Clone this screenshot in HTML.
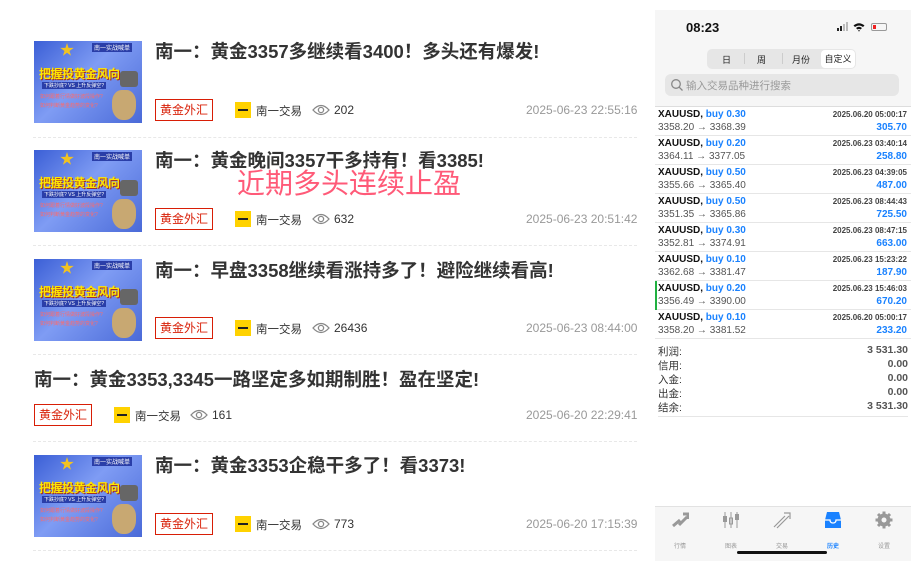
<!DOCTYPE html>
<html><head><meta charset="utf-8"><style>
*{margin:0;padding:0;box-sizing:border-box}
body{width:919px;height:571px;background:#fff;position:relative;overflow:hidden;font-family:"Liberation Sans","Noto Sans CJK SC",sans-serif}
.a{position:absolute}
.thumb{position:absolute;width:108px;height:82px;background:linear-gradient(135deg,#3b5fd6 0%,#7f9cf4 45%,#4a6ad8 100%);overflow:hidden}
.thumb .t1{position:absolute;left:5px;top:24px;font-size:12px;font-weight:bold;color:#ffe600;letter-spacing:-0.5px;text-shadow:1px 1px 0 #a0302a;white-space:nowrap}
.thumb .t2{position:absolute;left:8px;top:41px;font-size:5px;color:#fff;background:#2a3ea8;padding:0 2px;white-space:nowrap}
.thumb .t3{position:absolute;left:6px;top:52px;font-size:5px;color:#ff6a6a;line-height:9px;white-space:nowrap}
.thumb .bag{position:absolute;right:6px;bottom:3px;width:24px;height:30px;background:#c8a872;border-radius:40% 40% 45% 45%}
.thumb .star{position:absolute;left:26px;top:2px;width:14px;height:14px;background:#f2c320;clip-path:polygon(50% 0,61% 35%,98% 35%,68% 57%,79% 91%,50% 70%,21% 91%,32% 57%,2% 35%,39% 35%)}
.thumb .sq{position:absolute;left:86px;top:30px;width:18px;height:16px;background:#666;border-radius:3px}
.thumb .hd{position:absolute;left:58px;top:2px;font-size:6px;color:#fff;background:#2a3ea8;padding:0 2px}
.title{position:absolute;font-size:18.5px;font-weight:bold;color:#333;white-space:nowrap}
.tag{position:absolute;width:58px;height:22px;border:1px solid #d81e06;color:#d81e06;font-size:12px;line-height:20px;text-align:center}
.logo{position:absolute;width:16px;height:16px;background:#ffd200}
.logo:after{content:"";position:absolute;left:3px;top:7px;width:10px;height:2px;background:#222}
.author{position:absolute;font-size:11.5px;color:#333}
.eye{position:absolute;width:18px;height:12px}
.views{position:absolute;font-size:12px;color:#333}
.date{position:absolute;font-size:12px;color:#999}
.sep{position:absolute;left:33px;width:604px;border-top:1px dashed #e8e8e8}
.ph{position:absolute;left:655px;top:10px;width:256px;height:551px;background:#fff}
.row{position:absolute;left:0;width:256px;height:29px;border-bottom:1px solid #e6e6e6;font-size:10px}
.row .l1{position:absolute;left:3px;top:2px;font-weight:bold;color:#111}
.row .l1 b{color:#1a82ff}
.row .d{position:absolute;right:4px;top:3px;font-size:8px;font-weight:bold;color:#444}
.row .l2{position:absolute;left:3px;top:15px;color:#555}
.row .v{position:absolute;right:4px;top:15px;font-weight:bold;color:#1a82ff}
.sm{position:absolute;left:3px;width:250px;font-size:10.5px;color:#333;height:14px}
.sm span{position:absolute;right:0;font-weight:bold;color:#555}
.tab{position:absolute;top:531px;font-size:6px;color:#999;text-align:center;width:30px}
</style></head><body>

<div class="thumb" style="left:34px;top:41px"><div class="star"></div><div class="hd">南一实战喊单</div><div class="t1">把握投黄金风向</div><div class="sq"></div><div class="t2">下跌抄底? VS 上升反弹空?</div><div class="t3">如何跟着行情做好波段操作?<br>如何判断黄金趋势的变化?</div><div class="bag"></div></div>
<div class="title" style="left:155px;top:38px">南一：黄金3357多继续看3400！多头还有爆发!</div>
<div class="tag" style="left:155px;top:99px">黄金外汇</div>
<div class="logo" style="left:235px;top:102px"></div><div class="author" style="left:256px;top:103px">南一交易</div>
<svg class="eye" style="left:312px;top:104px" viewBox="0 0 18 12"><path d="M1 6Q9-3 17 6Q9 15 1 6Z" fill="none" stroke="#888" stroke-width="1.3"/><circle cx="9" cy="6" r="2.6" fill="none" stroke="#888" stroke-width="1.3"/></svg>
<div class="views" style="left:334px;top:103px">202</div>
<div class="date" style="left:526px;top:103px">2025-06-23 22:55:16</div>
<div class="sep" style="top:137px"></div>

<div class="thumb" style="left:34px;top:150px"><div class="star"></div><div class="hd">南一实战喊单</div><div class="t1">把握投黄金风向</div><div class="sq"></div><div class="t2">下跌抄底? VS 上升反弹空?</div><div class="t3">如何跟着行情做好波段操作?<br>如何判断黄金趋势的变化?</div><div class="bag"></div></div>
<div class="title" style="left:155px;top:147px">南一：黄金晚间3357干多持有！看3385!</div>
<div class="a" style="left:237px;top:162px;font-size:28px;color:#ff5a78;white-space:nowrap">近期多头连续止盈</div>
<div class="tag" style="left:155px;top:208px">黄金外汇</div>
<div class="logo" style="left:235px;top:211px"></div><div class="author" style="left:256px;top:212px">南一交易</div>
<svg class="eye" style="left:312px;top:213px" viewBox="0 0 18 12"><path d="M1 6Q9-3 17 6Q9 15 1 6Z" fill="none" stroke="#888" stroke-width="1.3"/><circle cx="9" cy="6" r="2.6" fill="none" stroke="#888" stroke-width="1.3"/></svg>
<div class="views" style="left:334px;top:212px">632</div>
<div class="date" style="left:526px;top:212px">2025-06-23 20:51:42</div>
<div class="sep" style="top:245px"></div>

<div class="thumb" style="left:34px;top:259px"><div class="star"></div><div class="hd">南一实战喊单</div><div class="t1">把握投黄金风向</div><div class="sq"></div><div class="t2">下跌抄底? VS 上升反弹空?</div><div class="t3">如何跟着行情做好波段操作?<br>如何判断黄金趋势的变化?</div><div class="bag"></div></div>
<div class="title" style="left:155px;top:257px">南一：早盘3358继续看涨持多了！避险继续看高!</div>
<div class="tag" style="left:155px;top:317px">黄金外汇</div>
<div class="logo" style="left:235px;top:320px"></div><div class="author" style="left:256px;top:321px">南一交易</div>
<svg class="eye" style="left:312px;top:322px" viewBox="0 0 18 12"><path d="M1 6Q9-3 17 6Q9 15 1 6Z" fill="none" stroke="#888" stroke-width="1.3"/><circle cx="9" cy="6" r="2.6" fill="none" stroke="#888" stroke-width="1.3"/></svg>
<div class="views" style="left:334px;top:321px">26436</div>
<div class="date" style="left:526px;top:321px">2025-06-23 08:44:00</div>
<div class="sep" style="top:354px"></div>

<div class="title" style="left:34px;top:366px">南一：黄金3353,3345一路坚定多如期制胜！盈在坚定!</div>
<div class="tag" style="left:34px;top:404px">黄金外汇</div>
<div class="logo" style="left:114px;top:407px"></div><div class="author" style="left:135px;top:408px">南一交易</div>
<svg class="eye" style="left:190px;top:409px" viewBox="0 0 18 12"><path d="M1 6Q9-3 17 6Q9 15 1 6Z" fill="none" stroke="#888" stroke-width="1.3"/><circle cx="9" cy="6" r="2.6" fill="none" stroke="#888" stroke-width="1.3"/></svg>
<div class="views" style="left:212px;top:408px">161</div>
<div class="date" style="left:526px;top:408px">2025-06-20 22:29:41</div>
<div class="sep" style="top:441px"></div>

<div class="thumb" style="left:34px;top:455px"><div class="star"></div><div class="hd">南一实战喊单</div><div class="t1">把握投黄金风向</div><div class="sq"></div><div class="t2">下跌抄底? VS 上升反弹空?</div><div class="t3">如何跟着行情做好波段操作?<br>如何判断黄金趋势的变化?</div><div class="bag"></div></div>
<div class="title" style="left:155px;top:452px">南一：黄金3353企稳干多了！看3373!</div>
<div class="tag" style="left:155px;top:513px">黄金外汇</div>
<div class="logo" style="left:235px;top:516px"></div><div class="author" style="left:256px;top:517px">南一交易</div>
<svg class="eye" style="left:312px;top:518px" viewBox="0 0 18 12"><path d="M1 6Q9-3 17 6Q9 15 1 6Z" fill="none" stroke="#888" stroke-width="1.3"/><circle cx="9" cy="6" r="2.6" fill="none" stroke="#888" stroke-width="1.3"/></svg>
<div class="views" style="left:334px;top:517px">773</div>
<div class="date" style="left:526px;top:517px">2025-06-20 17:15:39</div>
<div class="sep" style="top:550px"></div>

<div class="ph">
  <div class="a" style="left:0;top:0;width:256px;height:97px;background:#f6f6f6"></div>
  <div class="a" style="left:31px;top:10px;font-size:13px;font-weight:bold;color:#111">08:23</div>
  <div class="a" style="left:182px;top:18px;width:2px;height:3px;background:#222"></div>
  <div class="a" style="left:185px;top:16px;width:2px;height:5px;background:#222"></div>
  <div class="a" style="left:188px;top:14px;width:2px;height:7px;background:#bbb"></div>
  <div class="a" style="left:191px;top:12px;width:2px;height:9px;background:#bbb"></div>
  <svg class="a" style="left:198px;top:12px" width="12" height="10" viewBox="0 0 12 10"><path d="M0.5 3.5Q6-1 11.5 3.5L10 5Q6 2 2 5Z M3 6Q6 3.5 9 6L7.5 7.5Q6 6.5 4.5 7.5Z M5 8.5L6 9.6L7 8.5Q6 7.8 5 8.5Z" fill="#111"/></svg>
  <div class="a" style="left:216px;top:13px;width:16px;height:8px;border:1px solid #999;border-radius:2px"><div style="width:3px;height:4px;margin:1px;background:#e22"></div></div>
  <div class="a" style="left:52px;top:39px;width:149px;height:20px;background:#e6e6e6;border-radius:5px;font-size:9px;color:#222">
    <span class="a" style="left:15px;top:4px">日</span>
    <span class="a" style="left:37px;top:4px;width:1px;height:11px;background:#ccc"></span>
    <span class="a" style="left:50px;top:4px">周</span>
    <span class="a" style="left:75px;top:4px;width:1px;height:11px;background:#ccc"></span>
    <span class="a" style="left:85px;top:4px">月份</span>
    <span class="a" style="left:114px;top:1px;width:34px;height:18px;background:#fff;border-radius:4px;text-align:center;line-height:18px">自定义</span>
  </div>
  <div class="a" style="left:10px;top:64px;width:234px;height:22px;background:#e6e6e6;border-radius:6px">
    <svg class="a" style="left:5px;top:4px" width="14" height="14" viewBox="0 0 14 14"><circle cx="6" cy="6" r="4.3" fill="none" stroke="#888" stroke-width="1.3"/><path d="M9.2 9.2L12.5 12.5" stroke="#888" stroke-width="1.3"/></svg>
    <span class="a" style="left:21px;top:4px;font-size:10.5px;color:#999">输入交易品种进行搜索</span>
  </div>
  <div class="a" style="left:0;top:96px;width:256px;border-top:1px solid #ddd"></div>

  <div class="row" style="top:97px"><span class="l1">XAUUSD, <b>buy 0.30</b></span><span class="d">2025.06.20 05:00:17</span><span class="l2">3358.20 → 3368.39</span><span class="v">305.70</span></div>
  <div class="row" style="top:126px"><span class="l1">XAUUSD, <b>buy 0.20</b></span><span class="d">2025.06.23 03:40:14</span><span class="l2">3364.11 → 3377.05</span><span class="v">258.80</span></div>
  <div class="row" style="top:155px"><span class="l1">XAUUSD, <b>buy 0.50</b></span><span class="d">2025.06.23 04:39:05</span><span class="l2">3355.66 → 3365.40</span><span class="v">487.00</span></div>
  <div class="row" style="top:184px"><span class="l1">XAUUSD, <b>buy 0.50</b></span><span class="d">2025.06.23 08:44:43</span><span class="l2">3351.35 → 3365.86</span><span class="v">725.50</span></div>
  <div class="row" style="top:213px"><span class="l1">XAUUSD, <b>buy 0.30</b></span><span class="d">2025.06.23 08:47:15</span><span class="l2">3352.81 → 3374.91</span><span class="v">663.00</span></div>
  <div class="row" style="top:242px"><span class="l1">XAUUSD, <b>buy 0.10</b></span><span class="d">2025.06.23 15:23:22</span><span class="l2">3362.68 → 3381.47</span><span class="v">187.90</span></div>
  <div class="row" style="top:271px"><div class="a" style="left:0;top:0;width:2px;height:29px;background:#20b040"></div><span class="l1">XAUUSD, <b>buy 0.20</b></span><span class="d">2025.06.23 15:46:03</span><span class="l2">3356.49 → 3390.00</span><span class="v">670.20</span></div>
  <div class="row" style="top:300px"><span class="l1">XAUUSD, <b>buy 0.10</b></span><span class="d">2025.06.20 05:00:17</span><span class="l2">3358.20 → 3381.52</span><span class="v">233.20</span></div>

  <div class="sm" style="top:334px">利润:<span>3 531.30</span></div>
  <div class="sm" style="top:348px">信用:<span>0.00</span></div>
  <div class="sm" style="top:362px">入金:<span>0.00</span></div>
  <div class="sm" style="top:376px">出金:<span>0.00</span></div>
  <div class="sm" style="top:390px">结余:<span>3 531.30</span></div>
  <div class="a" style="left:3px;top:406px;width:250px;border-top:1px solid #e6e6e6"></div>

  <div class="a" style="left:0;top:496px;width:256px;height:55px;background:#f6f6f6;border-top:1px solid #e2e2e2"></div>
  <svg class="a" style="left:16px;top:502px" width="18" height="16" viewBox="0 0 18 16"><path d="M2 14L9 8M8 13L16 5M12 2L17 2L17 7" stroke="#999" stroke-width="3" fill="none"/></svg>
  <svg class="a" style="left:67px;top:501px" width="18" height="18" viewBox="0 0 18 18"><path d="M3 1V17M9 1V17M15 1V17" stroke="#999" stroke-width="1"/><rect x="1" y="5" width="4" height="6" fill="#999"/><rect x="7.5" y="7" width="3" height="6" fill="none" stroke="#999"/><rect x="13" y="3" width="4" height="6" fill="#999"/></svg>
  <svg class="a" style="left:118px;top:501px" width="18" height="18" viewBox="0 0 18 18"><path d="M1 16L12 5M4 17L16 5M11 2H17V8" stroke="#999" stroke-width="1.2" fill="none"/></svg>
  <svg class="a" style="left:169px;top:501px" width="18" height="18" viewBox="0 0 18 18"><path d="M3 1H15L17 9V17H1V9Z" fill="#1a82ff"/><path d="M1 9H6Q6 12 9 12Q12 12 12 9H17" stroke="#fff" stroke-width="1.3" fill="none"/></svg>
  <svg class="a" style="left:220px;top:501px" width="18" height="18" viewBox="0 0 18 18"><circle cx="9" cy="9" r="6.5" fill="#999"/><path d="M9 0.5V17.5M0.5 9H17.5M3 3L15 15M15 3L3 15" stroke="#999" stroke-width="3"/><circle cx="9" cy="9" r="2.5" fill="#f6f6f6"/></svg>
  <div class="tab" style="left:10px">行情</div>
  <div class="tab" style="left:61px">图表</div>
  <div class="tab" style="left:112px">交易</div>
  <div class="tab" style="left:163px;color:#1a82ff;font-weight:bold">历史</div>
  <div class="tab" style="left:214px">设置</div>
  <div class="a" style="left:82px;top:541px;width:90px;height:3px;border-radius:2px;background:#111"></div>
</div>
</body></html>
